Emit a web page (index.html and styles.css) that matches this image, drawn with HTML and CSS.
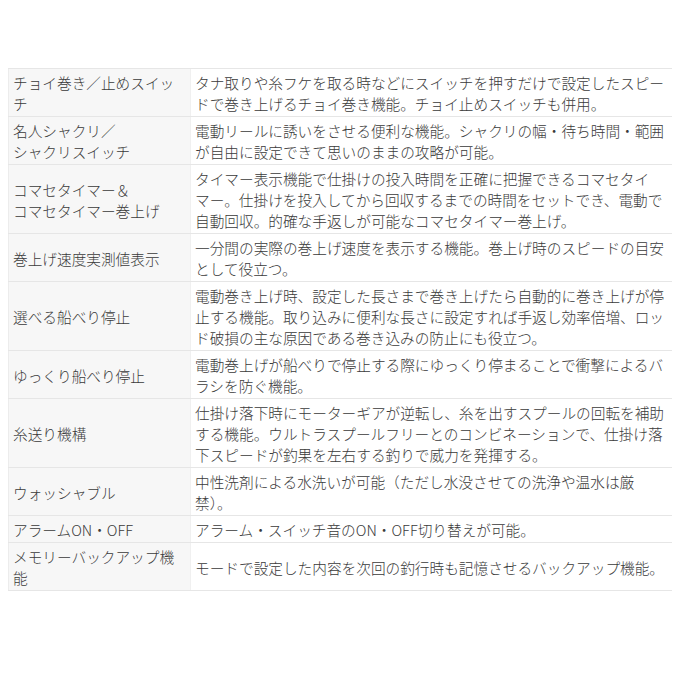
FILE: index.html
```html
<!DOCTYPE html>
<html lang="ja">
<head>
<meta charset="utf-8">
<title>機能一覧</title>
<link rel="stylesheet" href="styles.css">
</head>
<body>
<div class="page">
<table class="spec">
<tbody>
<tr><th>チョイ巻き／止めスイッチ</th><td>タナ取りや糸フケを取る時などにスイッチを押すだけで設定したスピードで巻き上げるチョイ巻き機能。チョイ止めスイッチも併用。</td></tr>
<tr><th>名人シャクリ／<br>シャクリスイッチ</th><td>電動リールに誘いをさせる便利な機能。シャクリの幅・待ち時間・範囲が自由に設定できて思いのままの攻略が可能。</td></tr>
<tr><th>コマセタイマー＆<br>コマセタイマー巻上げ</th><td>タイマー表示機能で仕掛けの投入時間を正確に把握できるコマセタイマー。仕掛けを投入してから回収するまでの時間をセットでき、電動で自動回収。的確な手返しが可能なコマセタイマー巻上げ。</td></tr>
<tr><th>巻上げ速度実測値表示</th><td>一分間の実際の巻上げ速度を表示する機能。巻上げ時のスピードの目安として役立つ。</td></tr>
<tr><th>選べる船べり停止</th><td>電動巻き上げ時、設定した長さまで巻き上げたら自動的に巻き上げが停止する機能。取り込みに便利な長さに設定すれば手返し効率倍増、ロッド破損の主な原因である巻き込みの防止にも役立つ。</td></tr>
<tr><th>ゆっくり船べり停止</th><td>電動巻上げが船べりで停止する際にゆっくり停まることで衝撃によるバラシを防ぐ機能。</td></tr>
<tr><th>糸送り機構</th><td>仕掛け落下時にモーターギアが逆転し、糸を出すスプールの回転を補助する機能。ウルトラスプールフリーとのコンビネーションで、仕掛け落下スピードが釣果を左右する釣りで威力を発揮する。</td></tr>
<tr><th>ウォッシャブル</th><td>中性洗剤による水洗いが可能（ただし水没させての洗浄や温水は厳禁）。</td></tr>
<tr><th>アラームON・OFF</th><td>アラーム・スイッチ音のON・OFF切り替えが可能。</td></tr>
<tr><th>メモリーバックアップ機能</th><td>モードで設定した内容を次回の釣行時も記憶させるバックアップ機能。</td></tr>
</tbody>
</table>
</div>
</body>
</html>
```
FILE: styles.css
```css
html, body {
  margin: 0;
  padding: 0;
  background: #ffffff;
}
body {
  padding: 68px 8px 8px;
  font-family: "Noto Sans CJK JP", "Noto Sans", sans-serif;
  color: #3a3a3a;
}
.spec {
  width: 664px;
  border-collapse: collapse;
  table-layout: fixed;
  font-size: 11pt;
  font-weight: 300;
  line-height: 21px;
  line-break: strict;
}
.spec th,
.spec td {
  border-top: 1px solid #e6e6e6;
  border-bottom: 1px solid #e6e6e6;
  padding: 3px 4px 2px;
  vertical-align: middle;
  text-align: left;
  font-weight: 300;
}
.spec th {
  width: 173px;
  background: #f7f7f7;
  border-left: 1px solid #ececec;
}
.spec td {
  background: #ffffff;
  border-left: 1px solid #f0f0f0;
}
```
